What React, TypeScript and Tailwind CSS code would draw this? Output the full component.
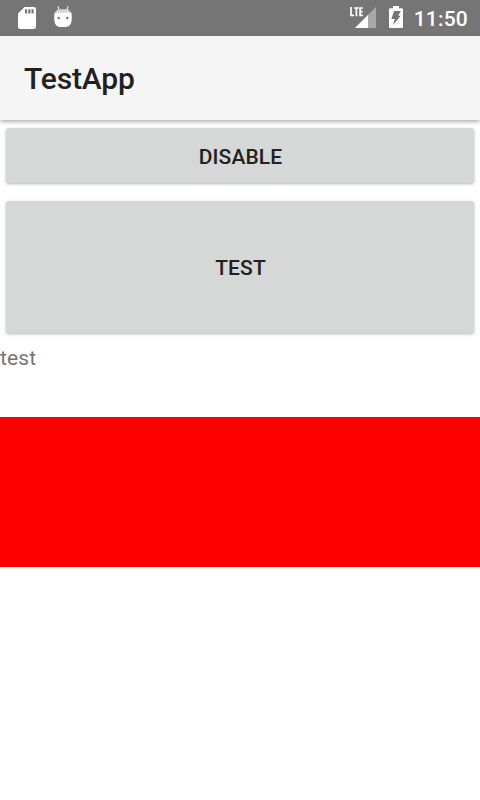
import React from "react";

function SdCardIcon() {
  return (
    <svg width="18" height="22" viewBox="0 0 18 22" className="ml-[18px] mt-[7px] shrink-0">
      <path
        fill="#fff"
        fillRule="evenodd"
        d="M6.6 0H15.8A2.2 2.2 0 0 1 18 2.2V19.8A2.2 2.2 0 0 1 15.8 22H2.2A2.2 2.2 0 0 1 0 19.8V6.6ZM7 2.2V6.6H9.1V2.2ZM10.3 2.2V6.6H12.4V2.2ZM13.5 2.2V6.6H15.6V2.2Z"
      />
    </svg>
  );
}

function AndroidHeadIcon() {
  return (
    <svg width="18" height="22" viewBox="0 0 18 22" className="ml-[18px] mt-[6px] shrink-0">
      <path d="M4 0.2L5 4M14 0.2L13 4" stroke="#e8e8e8" strokeWidth="1.2" fill="none" />
      <path d="M1 7.2C1.8 4.6 3.6 3.3 5 3.3H13C14.4 3.3 16.2 4.6 17 7.2Z" fill="#d5d5d5" />
      <path
        fill="#fff"
        d="M0.6 6.8H17.4C17.9 9 18 13 17.4 15.8C16.8 19 15 20.9 12 20.9H6C3 20.9 1.2 19 0.6 15.8C0 13 0.1 9 0.6 6.8Z"
      />
      <circle cx="4.7" cy="12" r="1.2" fill="#757575" />
      <circle cx="13.3" cy="12" r="1.2" fill="#757575" />
    </svg>
  );
}

function SignalIcon() {
  return (
    <svg width="28" height="24" viewBox="0 0 28 24" className="mt-[5px] shrink-0">
      <path d="M5 23L26 2V23Z" fill="#a9a9a9" />
      <path d="M0 1H14V13.2H0Z" fill="#757575" />
      <path d="M5 23L18 10V23Z" fill="#fff" />
      <path
        d="M1 2V10.4H4M4.1 3H8.7M6.4 3V11.3M12.9 3H10.1V10.4H12.9M10.1 6.6H12.6"
        stroke="#fff"
        strokeWidth="1.7"
        fill="none"
      />
    </svg>
  );
}

function BatteryIcon() {
  return (
    <svg width="14" height="22" viewBox="0 0 14 22" className="ml-[11px] mt-[6px] shrink-0">
      <path
        fill="#fff"
        d="M4 0H10V2.2H12.8Q14 2.2 14 3.4V20.8Q14 22 12.8 22H1.2Q0 22 0 20.8V3.4Q0 2.2 1.2 2.2H4Z"
      />
      <path fill="#757575" d="M5 5H11.8L9.2 9.8H11.8L4 19L5.7 13H2.4Z" />
    </svg>
  );
}

const buttonClass =
  "flex items-center justify-center rounded-[3px] bg-[#d6d8d7] pl-px text-[21px] font-medium leading-none tracking-[0.1px] text-[#212121] shadow-[0_1px_3px_rgba(0,0,0,0.3)]";

export default function App() {
  return (
    <div className="flex h-[800px] w-[480px] flex-col overflow-hidden bg-white font-[Roboto,sans-serif]">
      <div className="relative z-10 flex h-9 shrink-0 items-start bg-[#757575]">
        <SdCardIcon />
        <AndroidHeadIcon />
        <div className="flex-1" />
        <SignalIcon />
        <BatteryIcon />
        <span className="ml-[11px] mr-3 mt-[7px] text-[21px] font-medium leading-6 tracking-[0.2px] text-white">11:50</span>
      </div>
      <header className="flex h-[84px] shrink-0 items-center bg-[#f5f5f5] pl-6 pt-[2px] shadow-[0_1px_5px_rgba(0,0,0,0.42)]">
        <h1 className="text-[30px] font-medium leading-none tracking-[-0.15px] text-[#212121]">TestApp</h1>
      </header>
      <main className="flex flex-col pt-2">
        <div className="flex flex-col gap-[18px] px-1.5">
          <button className={`${buttonClass} h-[55px] pt-[3px]`}>DISABLE</button>
          <button className={`${buttonClass} h-[132px] pt-[2px]`}>TEST</button>
        </div>
        <p className="mt-3 h-[72px] text-[21px] leading-[26px] tracking-[0.1px] text-[#757575]">test</p>
        <div className="h-[150px] bg-[#ff0000]" />
      </main>
    </div>
  );
}
